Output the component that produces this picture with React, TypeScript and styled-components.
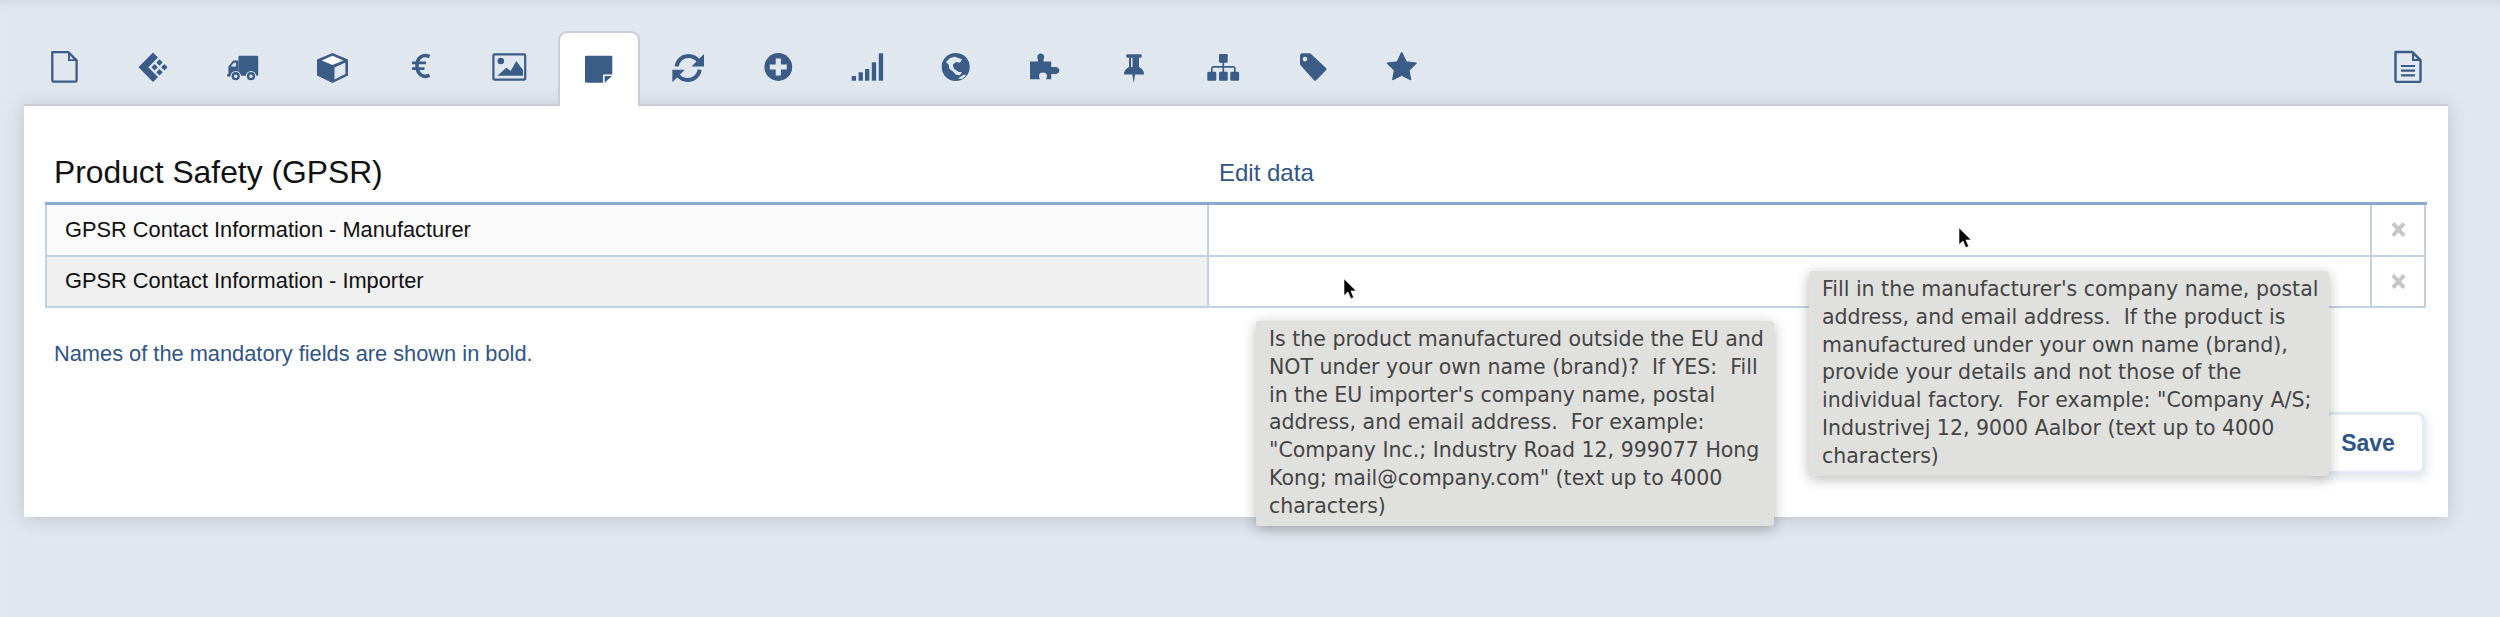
import React from "react";
import styled, { createGlobalStyle } from "styled-components";

const INK = "#3a5c87";
const BG = "#e1e7ee";

const Global = createGlobalStyle`
  html, body { margin: 0; padding: 0; background: ${BG}; }
  body { font-family: "Liberation Sans", Arial, sans-serif; }
`;

const Page = styled.div`
  position: relative;
  width: 2500px;
  height: 617px;
  overflow: hidden;
  background: ${BG};
  box-shadow: inset 0 8px 8px -6px rgba(60, 70, 90, 0.12);
`;

const TabBar = styled.nav`
  display: flex;
  align-items: flex-end;
  gap: 7.2px;
  height: 104px;
  width: 2426px;
  padding-left: 23px;
`;

const Tab = styled.a<{ $active?: boolean; $end?: boolean }>`
  position: relative;
  z-index: 2;
  display: flex;
  justify-content: center;
  box-sizing: border-box;
  flex: 0 0 82px;
  height: 75px;
  margin-bottom: -2px;
  margin-left: ${(p) => (p.$end ? "auto" : "0")};
  padding-top: 16px;
  border-radius: 9px 9px 0 0;
  background: ${(p) => (p.$active ? "#fff" : "transparent")};
  border: ${(p) => (p.$active ? "2px solid #c9ced6" : "2px solid transparent")};
  border-bottom: 0;
  & > svg { margin-top: -2px; }
`;

const Glyph = styled.svg`
  display: block;
  flex: none;
  width: 36px;
  height: 40px;
  fill: ${INK};
  .line { fill: none; stroke: ${INK}; }
  .hole { fill: ${BG}; }
  .white { fill: #fff; }
`;

const Panel = styled.main`
  box-sizing: border-box;
  position: relative;
  width: 2424px;
  height: 413px;
  margin-left: 24px;
  padding: 44px 21px 0;
  background: #fff;
  border-top: 2px solid #c7ccd4;
  box-shadow: 0 2px 18px rgba(60, 70, 90, 0.22);
`;

const Header = styled.header`
  display: grid;
  grid-template-columns: 1164px 1fr;
  align-items: center;
  height: 44px;
  margin-bottom: 8px;
`;

const Title = styled.h1`
  margin: 0;
  padding-left: 9px;
  font-size: 31.8px;
  font-weight: 400;
  color: #111;
`;

const EditLink = styled.a`
  padding-left: 10px;
  margin-top: 2px;
  font-size: 24px;
  color: #2f5587;
`;

const Table = styled.div`
  display: grid;
  grid-template-columns: 1164px 1163px 54px;
  grid-auto-rows: 51.5px;
  border-top: 3px solid #8aaad0;
`;

const Cell = styled.div<{ $tone?: string; $first?: boolean }>`
  box-sizing: border-box;
  display: flex;
  align-items: center;
  background: ${(p) => p.$tone || "#fff"};
  border-right: 2px solid #c0d2e6;
  border-bottom: 2px solid #c0d2e6;
  border-left: ${(p) => (p.$first ? "2px solid #c0d2e6" : "0")};
`;

const Label = styled(Cell)`
  padding-left: 18px;
  font-size: 21.8px;
  color: #111;
`;

const Remove = styled(Cell)`
  justify-content: center;
  svg { width: 15px; height: 17px; fill: #c6c6c6; }
`;

const Note = styled.p`
  margin: 34px 0 0;
  padding-left: 9px;
  font-size: 21.8px;
  line-height: 24px;
  color: #2f5587;
`;

const Actions = styled.div`
  display: flex;
  justify-content: flex-end;
  margin-top: 46px;
  padding-right: 2px;
`;

const SaveButton = styled.button`
  box-sizing: border-box;
  width: 114px;
  height: 62px;
  padding: 0;
  font: 700 23px "Liberation Sans", Arial, sans-serif;
  color: #2f5587;
  background: #fff;
  border: 3px solid #e3eaf4;
  border-radius: 8px;
  box-shadow: 2px 4px 10px rgba(60, 80, 120, 0.16);
`;

const Tooltip = styled.div<{ $left: number; $top: number; $width: number }>`
  position: absolute;
  z-index: 5;
  left: ${(p) => p.$left}px;
  top: ${(p) => p.$top}px;
  width: ${(p) => p.$width}px;
  box-sizing: border-box;
  padding: 5px 4px 5px 13px;
  font-family: "DejaVu Sans", Verdana, sans-serif;
  font-size: 20.5px;
  line-height: 27.8px;
  white-space: pre-wrap;
  color: #444;
  background: #e0e0de;
  border-radius: 3px;
  box-shadow: 0 3px 14px rgba(0, 0, 0, 0.28);
`;

const Cursor = styled.svg<{ $left: number; $top: number }>`
  position: absolute;
  z-index: 6;
  left: ${(p) => p.$left}px;
  top: ${(p) => p.$top}px;
  width: 15px;
  height: 22px;
`;

const Icon = ({ children }: { children: React.ReactNode }) => (
  <Glyph viewBox="0 0 36 40">{children}</Glyph>
);

const tabs: React.ReactNode[] = [
  <>
    <path className="line" strokeWidth="2.3" strokeLinejoin="round" d="M6.3 5.2H22.5L30.6 13.3V33.4a1.2 1.2 0 0 1-1.2 1.2H7.5a1.2 1.2 0 0 1-1.2-1.2Z" />
    <path d="M22 5 31 14H22Z" />
    <path className="hole" d="M24 8.5 27.6 12.2H24Z" />
  </>,
  <>
    <path d="M18 5.5 3.5 20.3 18 35 23 30 13.3 20.3 23 10.6Z" />
    <path d="M24.5 12.3 27.7 15.5 24.5 18.7 21.3 15.5ZM29.4 17.1 32.6 20.3 29.4 23.5 26.2 20.3ZM19.6 17.1 22.8 20.3 19.6 23.5 16.4 20.3ZM24.5 22 27.7 25.2 24.5 28.4 21.3 25.2Z" />
  </>,
  <>
    <rect x="14.5" y="8.7" width="19.7" height="20" rx="1.2" />
    <path d="M14.5 13.5H9.2L4.4 19.5V27H3.2V29.5H14.5Z" />
    <path className="hole" d="M12 15.8H9.8L6.8 19.6H12Z" />
    <circle className="hole" cx="11.7" cy="29.2" r="5.3" />
    <circle className="hole" cx="27" cy="29.2" r="5.3" />
    <circle cx="11.7" cy="29.2" r="4.1" />
    <circle cx="27" cy="29.2" r="4.1" />
    <circle className="hole" cx="11.7" cy="29.2" r="1.7" />
    <circle className="hole" cx="27" cy="29.2" r="1.7" />
  </>,
  <>
    <path d="M18.5 6 34 12.6V28.5L18.5 36 3 28.5V12.6Z" />
    <path className="white" d="M18.5 8.8 29.3 13.4 18.5 18 7.7 13.4Z" />
    <path className="hole" d="M20.5 20.5 31.4 15.6V27L20.5 32.4Z" />
  </>,
  <>
    <path className="line" strokeWidth="3.6" d="M26.6 9.6C20 6.5 14 10.4 14 18.8 14 27.4 20 31.2 26.6 28.4" />
    <path className="line" strokeWidth="2.6" d="M9 15.9H23M9 21.6H21.5" />
  </>,
  <>
    <rect className="line" strokeWidth="2.2" x="1.4" y="7.4" width="31.8" height="25.2" rx="1" />
    <circle cx="8.8" cy="14" r="3.3" />
    <path d="M5.3 28.8 14.3 20.7 18.7 24 24.3 14 31 23V28.8Z" />
  </>,
  <>
    <path d="M5.4 8.7H30a1.3 1.3 0 0 1 1.3 1.3V27.4H22V35.7H5.4A1.4 1.4 0 0 1 4 34.3V10.1A1.4 1.4 0 0 1 5.4 8.7Z" />
    <path d="M23.6 29 31 29 23.6 35.7Z" />
  </>,
  <>
    <path className="line" strokeWidth="4" d="M6.6 19.5C7.6 13 12.8 9 18.8 9 23 9 26.3 11 29 14.4" />
    <path d="M34 7V19.5H21.5Z" />
    <path className="line" strokeWidth="4" d="M29.7 22.6C28.7 29 23.5 33 17.5 33 13.4 33 10 31 7.4 27.6" />
    <path d="M2.4 35.3V22.8H14.8Z" />
  </>,
  <>
    <circle cx="18.3" cy="20" r="13.9" />
    <path className="hole" d="M15.7 11.5H20.9V17.4H26.8V22.6H20.9V28.5H15.7V22.6H9.8V17.4H15.7Z" />
  </>,
  <>
    <rect x="2.7" y="29" width="4.3" height="4.7" />
    <rect x="9.6" y="25.3" width="4.3" height="8.4" />
    <rect x="16" y="22" width="4.3" height="11.7" />
    <rect x="22.8" y="15.3" width="4.3" height="18.4" />
    <rect x="29.8" y="6.3" width="4.3" height="27.4" />
  </>,
  <>
    <circle cx="17.7" cy="20" r="14" />
    <path className="hole" d="M8 15 12 11 16.7 9.7 24 12.3 22 15.7 18 15 14.7 17.7 16 21.7 20.7 25 24 25 22 28.3 18 27.7 14.7 24.3 11.3 21.7 10.7 17.7Z" />
    <path className="hole" d="M20 31.5 26 27.5 28 28.5 24 32Z" />
  </>,
  <>
    <path d="M11 14.5C11.2 12.8 10.3 11.6 10.3 10 10.3 8 11.8 6.6 13.7 6.6 15.6 6.6 17.2 8 17.2 10 17.2 11.6 16.2 12.8 16.4 14.5H24.2V20C25.8 20.2 26.7 20 28.4 20 30.6 20 32.4 21.5 32.4 23.6 32.4 25.7 30.6 27.2 28.4 27.2 26.7 27.2 25.8 27 24.2 27.2V32.2H19.2C19.6 30.6 20 30.2 20 28.6 20 26.8 18 25.6 16 25.6 14 25.6 12 26.8 12 28.6 12 30.2 12.4 30.6 12.8 32.2H3V14.5Z" />
  </>,
  <>
    <rect x="10.3" y="7.2" width="15.4" height="3.6" rx="1.4" />
    <path d="M13 10.5H23V21H13Z" />
    <rect className="hole" x="15" y="11" width="1.5" height="10" />
    <path d="M13 20H23C25 21.5 28 22.6 28 27.4H8C8 22.6 11 21.5 13 20Z" />
    <path d="M16.2 27 19.2 27 17.7 36Z" />
  </>,
  <>
    <rect x="14" y="7" width="8.7" height="8.7" rx="1.3" />
    <rect x="2.3" y="24.7" width="9" height="9" rx="1.3" />
    <rect x="14" y="24.7" width="8.7" height="9" rx="1.3" />
    <rect x="25.3" y="24.7" width="8.8" height="9" rx="1.3" />
    <path className="line" strokeWidth="1.7" d="M18.3 15V25M6.8 25V21.4A1.6 1.6 0 0 1 8.4 19.8H28.2A1.6 1.6 0 0 1 29.8 21.4V25" />
  </>,
  <>
    <path fillRule="evenodd" d="M7.5 6.3H14.2A2.6 2.6 0 0 1 16 7L31 21A1.6 1.6 0 0 1 31 23.3L21.2 33.2A1.6 1.6 0 0 1 19 33.2L5.8 18.6A3 3 0 0 1 5 16.6V8.8A2.5 2.5 0 0 1 7.5 6.3ZM10 9.8A2.3 2.3 0 1 0 10 14.4 2.3 2.3 0 1 0 10 9.8Z" />
  </>,
  <>
    <path strokeLinejoin="round" strokeWidth="1.2" stroke={INK} d="M17.7 5.6 22.2 14.8 32.2 16.2 25 23.4 26.7 32.6 17.7 28.2 8.7 32.6 10.4 23.4 3.2 16.2 13.2 14.8Z" />
  </>,
];

const DocIcon = () => (
  <Icon>
    <path className="line" strokeWidth="2.4" strokeLinejoin="round" d="M5.5 5H22.5L30.5 13V33.7a1.2 1.2 0 0 1-1.2 1.2H6.7a1.2 1.2 0 0 1-1.2-1.2Z" />
    <path d="M22 5 31 14H22Z" />
    <path className="hole" d="M24 8.5 27.5 12H24Z" />
    <path className="line" strokeWidth="2.2" d="M11 19H25M11 23.7H25M11 28.3H25" />
  </Icon>
);

const Cross = () => (
  <svg viewBox="0 0 14 15">
    <path d="M.5 3 3 .5 7 4.6 11 .5 13.5 3 9.5 7.5 13.5 12 11 14.5 7 10.4 3 14.5.5 12 4.5 7.5Z" />
  </svg>
);

const Arrow = ({ left, top }: { left: number; top: number }) => (
  <Cursor $left={left} $top={top} viewBox="0 0 15 22">
    <path fill="#000" stroke="#fff" strokeWidth="0.6" d="M1 .8V17.6L5 13.9 7.8 20.6 10.7 19.4 7.9 12.9H13.2Z" />
  </Cursor>
);

const rows = [
  { label: "GPSR Contact Information - Manufacturer", tone: "#fafafa" },
  { label: "GPSR Contact Information - Importer", tone: "#f0f0f0" },
];

export default function App() {
  return (
    <Page>
      <Global />
      <TabBar>
        {tabs.map((icon, i) => (
          <Tab key={i} $active={i === 6}>
            <Icon>{icon}</Icon>
          </Tab>
        ))}
        <Tab $end>
          <DocIcon />
        </Tab>
      </TabBar>
      <Panel>
        <Header>
          <Title>Product Safety (GPSR)</Title>
          <EditLink>Edit data</EditLink>
        </Header>
        <Table>
          {rows.map((r) => (
            <React.Fragment key={r.label}>
              <Label $first $tone={r.tone}>{r.label}</Label>
              <Cell />
              <Remove><Cross /></Remove>
            </React.Fragment>
          ))}
        </Table>
        <Note>Names of the mandatory fields are shown in bold.</Note>
        <Actions>
          <SaveButton>Save</SaveButton>
        </Actions>
      </Panel>
      <Tooltip $left={1256} $top={321} $width={518}>
        {`Is the product manufactured outside the EU and NOT under your own name (brand)?  If YES:  Fill in the EU importer's company name, postal address, and email address.  For example: "Company Inc.; Industry Road 12, 999077 Hong Kong; mail@company.com" (text up to 4000 characters)`}
      </Tooltip>
      <Tooltip $left={1809} $top={271} $width={520}>
        {`Fill in the manufacturer's company name, postal address, and email address.  If the product is manufactured under your own name (brand), provide your details and not those of the individual factory.  For example: "Company A/S; Industrivej 12, 9000 Aalbor (text up to 4000 characters)`}
      </Tooltip>
      <Arrow left={1343} top={278} />
      <Arrow left={1958} top={227} />
    </Page>
  );
}
